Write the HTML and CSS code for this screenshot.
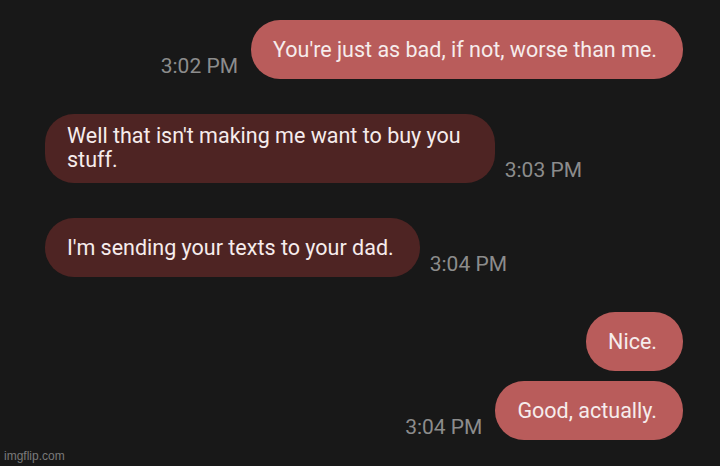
FILE: index.html
```html
<!DOCTYPE html>
<html>
<head>
<meta charset="utf-8">
<link rel="stylesheet" href="styles.css">
</head>
<body>
<div class="chat">
  <div class="row sent">
    <span class="time">3:02 PM</span>
    <div class="bubble out">You're just as bad, if not, worse than me.</div>
  </div>
  <div class="row recv gap-l">
    <div class="bubble in multi">Well that isn't making me want to buy you<br>stuff.</div>
    <span class="time">3:03 PM</span>
  </div>
  <div class="row recv gap-l">
    <div class="bubble in">I'm sending your texts to your dad.</div>
    <span class="time">3:04 PM</span>
  </div>
  <div class="row sent gap-l">
    <div class="bubble out">Nice.</div>
  </div>
  <div class="row sent gap-s">
    <span class="time">3:04 PM</span>
    <div class="bubble out">Good, actually.</div>
  </div>
</div>
<div class="watermark">imgflip.com</div>
</body>
</html>
```
FILE: styles.css
```css
html, body {
  margin: 0;
  padding: 0;
  background: #181818;
  width: 720px;
  height: 466px;
  overflow: hidden;
  font-family: Roboto, "Noto Sans", sans-serif;
}
body {
  position: relative;
}
.chat {
  display: flex;
  flex-direction: column;
  padding: 20px 37px 0 45px;
}
.row {
  display: flex;
  align-items: flex-end;
}
.row.sent {
  justify-content: flex-end;
}
.row.recv {
  justify-content: flex-start;
}
.gap-l {
  margin-top: 35px;
}
.gap-s {
  margin-top: 10px;
}
.bubble {
  box-sizing: border-box;
  min-height: 59px;
  display: flex;
  align-items: center;
  padding: 10px 26px 10px 22px;
  border-radius: 29px;
  font-size: 21.5px;
  line-height: 24px;
  color: #f6ecec;
}
.bubble.out {
  background: #b95c5b;
}
.bubble.in {
  background: #4e2423;
}
.bubble.multi {
  padding: 10px 34px 11px 22px;
}
.time {
  font-size: 21px;
  color: #8c8c8c;
  line-height: 24px;
  margin-bottom: 1px;
}
.sent .time {
  margin-right: 13px;
}
.recv .time {
  margin-left: 10px;
}
.watermark {
  position: absolute;
  left: 4px;
  bottom: 3px;
  font-size: 12px;
  color: #7a7a7a;
  font-family: "Liberation Sans", Arial, sans-serif;
}
```
